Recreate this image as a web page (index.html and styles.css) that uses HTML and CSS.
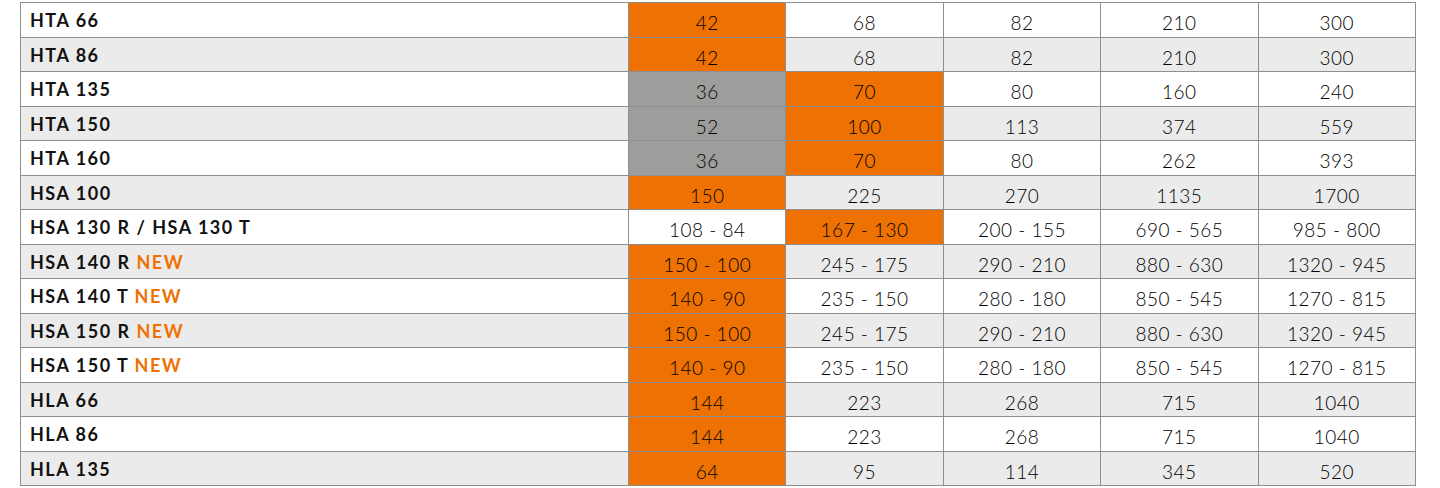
FILE: index.html
```html
<!DOCTYPE html>
<html lang="en">
<head>
<meta charset="utf-8">
<title>Table</title>
<link rel="stylesheet" href="styles.css">
</head>
<body>
<table class="spec">
<colgroup><col class="c-name"><col><col><col><col><col></colgroup>
<tbody>
<tr><th>HTA 66</th><td class="or">42</td><td>68</td><td>82</td><td>210</td><td>300</td></tr>
<tr><th>HTA 86</th><td class="or">42</td><td>68</td><td>82</td><td>210</td><td>300</td></tr>
<tr><th>HTA 135</th><td class="gr">36</td><td class="or">70</td><td>80</td><td>160</td><td>240</td></tr>
<tr><th>HTA 150</th><td class="gr">52</td><td class="or">100</td><td>113</td><td>374</td><td>559</td></tr>
<tr><th>HTA 160</th><td class="gr">36</td><td class="or">70</td><td>80</td><td>262</td><td>393</td></tr>
<tr><th>HSA 100</th><td class="or">150</td><td>225</td><td>270</td><td>1135</td><td>1700</td></tr>
<tr><th>HSA 130 R / HSA 130 T</th><td>108 - 84</td><td class="or">167 - 130</td><td>200 - 155</td><td>690 - 565</td><td>985 - 800</td></tr>
<tr><th>HSA 140 R <span class="new">NEW</span></th><td class="or">150 - 100</td><td>245 - 175</td><td>290 - 210</td><td>880 - 630</td><td>1320 - 945</td></tr>
<tr><th>HSA 140 T <span class="new">NEW</span></th><td class="or">140 - 90</td><td>235 - 150</td><td>280 - 180</td><td>850 - 545</td><td>1270 - 815</td></tr>
<tr><th>HSA 150 R <span class="new">NEW</span></th><td class="or">150 - 100</td><td>245 - 175</td><td>290 - 210</td><td>880 - 630</td><td>1320 - 945</td></tr>
<tr><th>HSA 150 T <span class="new">NEW</span></th><td class="or">140 - 90</td><td>235 - 150</td><td>280 - 180</td><td>850 - 545</td><td>1270 - 815</td></tr>
<tr><th>HLA 66</th><td class="or">144</td><td>223</td><td>268</td><td>715</td><td>1040</td></tr>
<tr><th>HLA 86</th><td class="or">144</td><td>223</td><td>268</td><td>715</td><td>1040</td></tr>
<tr><th>HLA 135</th><td class="or">64</td><td>95</td><td>114</td><td>345</td><td>520</td></tr>
</tbody>
</table>
</body>
</html>
```
FILE: styles.css
```css
html, body {
  margin: 0;
  padding: 0;
  background: #ffffff;
}
body {
  padding: 2px 0 0 20px;
  font-family: Lato, "Liberation Sans", sans-serif;
  color: #111111;
}
.spec {
  border-collapse: collapse;
  table-layout: fixed;
  width: 1396px;
  border: 1px solid #8f8f8f;
}
.c-name {
  width: 608px;
}
.spec tr {
  height: 34.5px;
}
.spec tr:nth-child(even) {
  background: #ebebeb;
}
.spec th,
.spec td {
  border: 1px solid #8f8f8f;
  padding: 0;
}
.spec th {
  text-align: left;
  vertical-align: top;
  padding: 6px 0 0 9px;
  font-size: 18px;
  font-weight: 700;
  color: #111111;
  letter-spacing: 1.5px;
}
.spec td {
  text-align: center;
  vertical-align: top;
  padding-top: 8px;
  font-size: 19px;
  font-weight: 300;
  color: #000000;
  letter-spacing: 0.5px;
}
.spec td.or {
  background: #ee7203;
}
.spec td.gr {
  background: #9d9d9c;
}
.new {
  color: #ee7203;
}
```
